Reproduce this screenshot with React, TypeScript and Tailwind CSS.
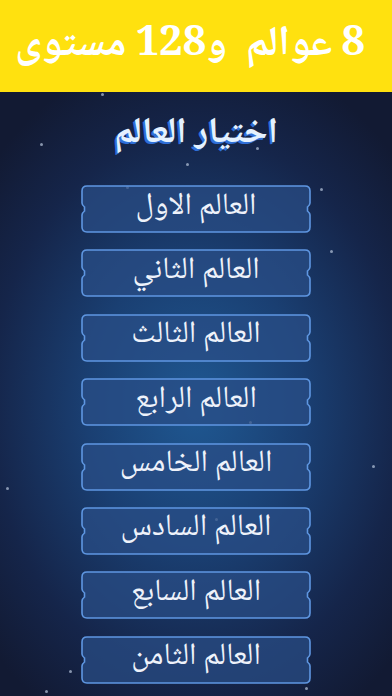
import React from 'react';

const worlds = [
  'العالم الاول',
  'العالم الثاني',
  'العالم الثالث',
  'العالم الرابع',
  'العالم الخامس',
  'العالم السادس',
  'العالم السابع',
  'العالم الثامن',
];

// star dots over the night background (x, y relative to the blue area)
const stars = [
  [101, 1], [256, 55], [186, 71], [126, 94], [40, 51], [320, 96], [6, 395],
  [249, 329], [372, 373], [69, 578], [45, 598], [305, 595], [215, 426], [330, 158],
];

function WorldButton({ label }: { label: string }) {
  return (
    <button className="relative w-[230px] h-[48px] flex items-center justify-center">
      <svg className="absolute inset-0 w-full h-full" viewBox="0 0 230 48" preserveAspectRatio="none">
        <path
          d="M6,1 H224 Q229,1 229,6 V18 Q229,20 226.5,22 V26 Q229,28 229,30 V42 Q229,47 224,47 H6 Q1,47 1,42 V30 Q1,28 3.5,26 V22 Q1,20 1,18 V6 Q1,1 6,1 Z"
          fill="rgba(42,78,134,0.72)"
          stroke="#5f97e2"
          strokeWidth="1.6"
        />
      </svg>
      <span className="relative text-[31px] leading-none text-[#eef2fa] font-['Noto_Naskh_Arabic','Noto_Sans_Arabic','DejaVu_Sans',sans-serif] pb-1" dir="rtl">
        {label}
      </span>
    </button>
  );
}

export default function App() {
  return (
    <div className="w-[392px] h-[696px] flex flex-col overflow-hidden">
      {/* Banner */}
      <div className="h-[92px] bg-[#ffe10f] flex items-center justify-end pr-[27px] shrink-0">
        <div dir="rtl" className="text-white font-bold text-[42px] leading-none font-['Noto_Naskh_Arabic','Noto_Sans_Arabic','DejaVu_Sans',sans-serif] whitespace-pre">
          {'8 عوالم  و128 مستوى'}
        </div>
      </div>

      {/* Night area */}
      <div className="relative flex-1 bg-[radial-gradient(ellipse_70%_60%_at_50%_52%,#1f5892_0%,#1a3f72_40%,#15254a_75%,#121a33_100%)]">
        {stars.map(([x, y], i) => (
          <div
            key={i}
            className="absolute w-[3px] h-[3px] rounded-full bg-[#b8c6dc]/70"
            style={{ left: x, top: y }}
          />
        ))}

        <div className="relative flex flex-col items-center pt-[23px]">
          <h1
            dir="rtl"
            className="h-[40px] text-[36px] leading-[40px] font-bold text-[#e4f1ff] font-['Noto_Naskh_Arabic','Noto_Sans_Arabic','DejaVu_Sans',sans-serif] [text-shadow:-2px_2px_0_#2f6fd8]"
          >
            اختيار العالم
          </h1>
          <div className="mt-[30px] flex flex-col gap-[16.4px]">
            {worlds.map((w) => (
              <WorldButton key={w} label={w} />
            ))}
          </div>
        </div>
      </div>
    </div>
  );
}
